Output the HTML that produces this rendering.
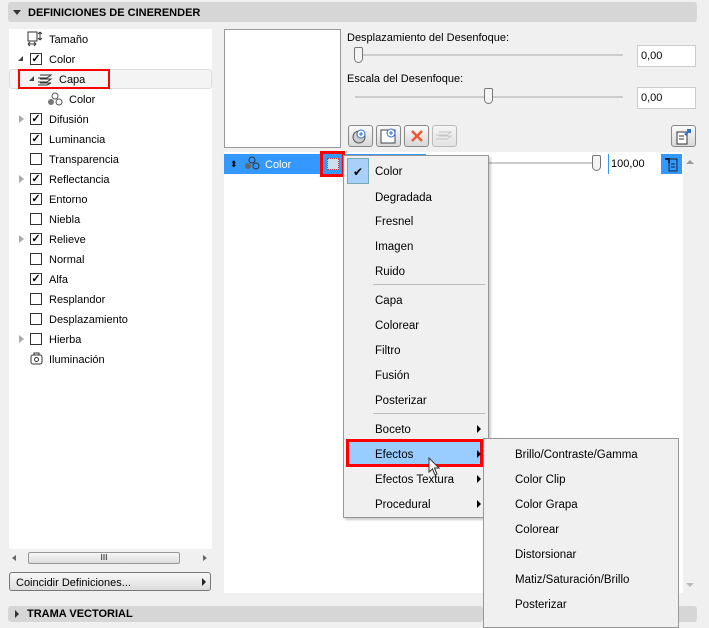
<!DOCTYPE html><html><head><style>
*{margin:0;padding:0;box-sizing:border-box}
body{width:709px;height:623px;background:#f0f0f0;font-family:"Liberation Sans",sans-serif;font-size:11px;color:#000;position:relative;overflow:hidden}
.a{position:absolute}
.hdr{background:#d6d6d6;border-radius:3px;font-weight:bold;font-size:11px}
.t{position:absolute;white-space:nowrap;line-height:14px}
.cb{position:absolute;width:12px;height:12px;border:1px solid #333;background:#fff;font-size:11px;line-height:10px;text-align:center;font-weight:bold}
.tri{position:absolute;width:0;height:0}
.inp{position:absolute;background:#fff;border:1px solid #ccc;padding-left:3px;line-height:20px}
.btn{position:absolute;width:25px;height:22px;border:1px solid #888;border-radius:3px;background:linear-gradient(#fafafa,#d8d8d8)}
.mi{position:absolute;left:375px;line-height:14px;font-size:11.5px}
.si{position:absolute;left:515px;line-height:14px;font-size:11.5px}
.ar{position:absolute;left:477px;width:0;height:0;border-left:4px solid #000;border-top:4px solid transparent;border-bottom:4px solid transparent}
</style></head><body>
<div class="a hdr" style="left:8px;top:2px;width:689px;height:20px"></div>
<div class="tri" style="left:13px;top:10px;border-top:5px solid #333;border-left:4px solid transparent;border-right:4px solid transparent"></div>
<div class="t" style="left:28px;top:6px;font-weight:bold">DEFINICIONES DE CINERENDER</div>

<div class="a" style="left:9px;top:29px;width:203px;height:520px;background:#fff"></div>
<div class="a" style="left:9px;top:69px;width:203px;height:20px;background:#f4f4f4;border:1px solid #ddd;border-radius:3px"></div>
<div class="a" style="left:18px;top:69px;width:92px;height:20px;border:2px solid #f00"></div>

<svg class="a" style="left:27px;top:31px" width="16" height="16" viewBox="0 0 16 16"><rect x="1" y="1" width="9" height="9" fill="none" stroke="#333"/><path d="M1 13h8M1 13l2-2M1 13l2 2M9 13l-2-2M9 13l-2 2M13 1v8M13 1l-2 2M13 1l2 2M13 9l-2-2M13 9l2-2" stroke="#333" fill="none"/></svg>
<div class="t" style="left:49px;top:33px">Tamaño</div>
<div class="tri" style="left:18px;top:56px;border-bottom:5px solid #444;border-left:5px solid transparent"></div>
<div class="cb" style="left:30px;top:53px">✓</div><div class="t" style="left:49px;top:53px">Color</div>
<div class="tri" style="left:29px;top:76px;border-bottom:5px solid #444;border-left:5px solid transparent"></div>
<svg class="a" style="left:37px;top:72px" width="16" height="14"><path d="M3 3h11L10 6H1M3 7h11L10 10H1M3 11h11L10 13H1" stroke="#333" fill="none"/></svg>
<div class="t" style="left:59px;top:73px">Capa</div>
<svg class="a" style="left:47px;top:92px" width="16" height="14"><circle cx="8" cy="4" r="3" fill="none" stroke="#555"/><circle cx="4" cy="10" r="3" fill="#777"/><circle cx="12" cy="10" r="3" fill="none" stroke="#555"/></svg>
<div class="t" style="left:69px;top:93px">Color</div>

<div class="tri" style="left:19px;top:115px;border-left:5px solid #aaa;border-top:4px solid transparent;border-bottom:4px solid transparent"></div>
<div class="cb" style="left:30px;top:113px">✓</div><div class="t" style="left:49px;top:113px">Difusión</div>
<div class="cb" style="left:30px;top:133px">✓</div><div class="t" style="left:49px;top:133px">Luminancia</div>
<div class="cb" style="left:30px;top:153px"></div><div class="t" style="left:49px;top:153px">Transparencia</div>
<div class="tri" style="left:19px;top:175px;border-left:5px solid #aaa;border-top:4px solid transparent;border-bottom:4px solid transparent"></div>
<div class="cb" style="left:30px;top:173px">✓</div><div class="t" style="left:49px;top:173px">Reflectancia</div>
<div class="cb" style="left:30px;top:193px">✓</div><div class="t" style="left:49px;top:193px">Entorno</div>
<div class="cb" style="left:30px;top:213px"></div><div class="t" style="left:49px;top:213px">Niebla</div>
<div class="tri" style="left:19px;top:235px;border-left:5px solid #aaa;border-top:4px solid transparent;border-bottom:4px solid transparent"></div>
<div class="cb" style="left:30px;top:233px">✓</div><div class="t" style="left:49px;top:233px">Relieve</div>
<div class="cb" style="left:30px;top:253px"></div><div class="t" style="left:49px;top:253px">Normal</div>
<div class="cb" style="left:30px;top:273px">✓</div><div class="t" style="left:49px;top:273px">Alfa</div>
<div class="cb" style="left:30px;top:293px"></div><div class="t" style="left:49px;top:293px">Resplandor</div>
<div class="cb" style="left:30px;top:313px"></div><div class="t" style="left:49px;top:313px">Desplazamiento</div>
<div class="tri" style="left:19px;top:335px;border-left:5px solid #aaa;border-top:4px solid transparent;border-bottom:4px solid transparent"></div>
<div class="cb" style="left:30px;top:333px"></div><div class="t" style="left:49px;top:333px">Hierba</div>
<svg class="a" style="left:30px;top:351px" width="13" height="14"><rect x="1" y="4" width="11" height="9" rx="2" fill="none" stroke="#333"/><circle cx="6.5" cy="8.5" r="2" fill="none" stroke="#333"/><path d="M4 4V2h5v2" stroke="#333" fill="none"/></svg>
<div class="t" style="left:49px;top:353px">Iluminación</div>

<div class="a" style="left:9px;top:550px;width:203px;height:16px;background:#f0f0f0"></div>
<div class="a" style="left:28px;top:552px;width:152px;height:12px;border:1px solid #999;border-radius:2px;background:linear-gradient(#f6f6f6,#ddd);text-align:center;font-size:8px;line-height:10px">III</div>
<div class="tri" style="left:12px;top:555px;border-right:4px solid #666;border-top:3px solid transparent;border-bottom:3px solid transparent"></div>
<div class="tri" style="left:203px;top:555px;border-left:4px solid #666;border-top:3px solid transparent;border-bottom:3px solid transparent"></div>
<div class="a" style="left:9px;top:572px;width:202px;height:19px;border:1px solid #777;border-radius:3px;background:linear-gradient(#f8f8f8,#ddd)"></div>
<div class="t" style="left:16px;top:576px">Coincidir Definiciones...</div>
<div class="tri" style="left:202px;top:578px;border-left:4px solid #222;border-top:4px solid transparent;border-bottom:4px solid transparent"></div>

<div class="a" style="left:224px;top:152px;width:459px;height:441px;background:#fff"></div>
<div class="a" style="left:224px;top:29px;width:117px;height:119px;background:#fff;border:1px solid #999"></div>

<div class="t" style="left:347px;top:31px">Desplazamiento del Desenfoque:</div>
<div class="a" style="left:355px;top:54px;width:268px;height:2px;background:#ccc"></div>
<div class="a" style="left:354px;top:47px;width:9px;height:16px;border:1px solid #777;border-radius:2px 2px 5px 5px;background:#f4f4f4"></div>
<div class="inp" style="left:637px;top:45px;width:59px;height:22px">0,00</div>
<div class="t" style="left:347px;top:72px">Escala del Desenfoque:</div>
<div class="a" style="left:355px;top:96px;width:268px;height:2px;background:#ccc"></div>
<div class="a" style="left:484px;top:88px;width:9px;height:16px;border:1px solid #777;border-radius:2px 2px 5px 5px;background:#f4f4f4"></div>
<div class="inp" style="left:637px;top:87px;width:59px;height:22px">0,00</div>

<div class="btn" style="left:348px;top:125px"><svg width="23" height="20"><circle cx="10" cy="11" r="6" fill="#ccc" stroke="#555"/><circle cx="12" cy="8" r="4" fill="#fff" stroke="#2a6ed0"/><path d="M12 6v4M10 8h4" stroke="#2a6ed0"/></svg></div>
<div class="btn" style="left:376px;top:125px"><svg width="23" height="20"><path d="M4 4h14v13H4z" fill="#fff" stroke="#444"/><circle cx="14" cy="7" r="4" fill="#fff" stroke="#2a6ed0"/><path d="M14 5v4M12 7h4" stroke="#2a6ed0"/></svg></div>
<div class="btn" style="left:404px;top:125px"><svg width="23" height="20"><path d="M7 5l10 10M17 5L7 15" stroke="#e53" stroke-width="2.5"/></svg></div>
<div class="btn" style="left:432px;top:125px;opacity:.5"><svg width="23" height="20"><path d="M6 6h12l-4 3H3M6 10h12l-4 3H3" stroke="#999" fill="none"/></svg></div>
<div class="btn" style="left:671px;top:125px"><svg width="23" height="20"><path d="M5 6h10v12H5z" fill="#fff" stroke="#333"/><path d="M7 10h5M7 13h5" stroke="#333"/><path d="M13 9l5-5M15 4h3v3" stroke="#2a6ed0" stroke-width="2" fill="none"/></svg></div>

<div class="a" style="left:224px;top:154px;width:202px;height:20px;background:#3399ff"></div>
<div class="t" style="left:230px;top:157px;color:#000;font-size:9px">⬍</div>
<svg class="a" style="left:244px;top:156px" width="16" height="14"><circle cx="8" cy="4" r="3" fill="none" stroke="#333"/><circle cx="4" cy="10" r="3" fill="#666"/><circle cx="12" cy="10" r="3" fill="none" stroke="#333"/></svg>
<div class="t" style="left:265px;top:158px;color:#fff">Color</div>
<div class="a" style="left:320px;top:151px;width:25px;height:26px;border:3px solid #f00"></div>
<div class="a" style="left:327px;top:158px;width:12px;height:12px;background:#cde;border:1px dotted #c33"></div>
<div class="a" style="left:488px;top:162px;width:110px;height:2px;background:#ccc"></div>
<div class="a" style="left:592px;top:155px;width:9px;height:16px;border:1px solid #777;border-radius:2px 2px 5px 5px;background:#f4f4f4"></div>
<div class="a" style="left:608px;top:154px;width:53px;height:20px;background:#fff;border-left:1px solid #3399ff;padding-left:2px;line-height:20px">100,00</div>
<div class="a" style="left:661px;top:154px;width:21px;height:20px;background:#3399ff"><svg width="21" height="20"><path d="M8 5h8v12H8z" fill="#3399ff" stroke="#123"/><path d="M10 10h4M10 13h4" stroke="#123"/><path d="M4 5h4v4" stroke="#124" stroke-width="2" fill="none"/></svg></div>
<div class="a" style="left:683px;top:152px;width:14px;height:441px;background:#f0f0f0"></div>
<div class="tri" style="left:686px;top:160px;border-bottom:4px solid #999;border-left:4px solid transparent;border-right:4px solid transparent"></div>
<div class="tri" style="left:686px;top:583px;border-top:4px solid #bbb;border-left:4px solid transparent;border-right:4px solid transparent"></div>

<div class="a" style="left:343px;top:155px;width:146px;height:363px;background:#f0f0f0;border:1px solid #979797;box-shadow:2px 2px 2px rgba(0,0,0,.2)"></div>
<div class="a" style="left:347px;top:158px;width:22px;height:26px;background:#a8d0f8;border:1px solid #7ab"></div>
<div class="t" style="left:353px;top:165px;font-size:12px">✔</div>
<div class="mi" style="top:165px">Color</div>
<div class="mi" style="top:191px">Degradada</div>
<div class="mi" style="top:215px">Fresnel</div>
<div class="mi" style="top:240px">Imagen</div>
<div class="mi" style="top:265px">Ruido</div>
<div class="a" style="left:373px;top:284px;width:112px;height:1px;background:#bbb"></div>
<div class="mi" style="top:294px">Capa</div>
<div class="mi" style="top:319px">Colorear</div>
<div class="mi" style="top:344px">Filtro</div>
<div class="mi" style="top:369px">Fusión</div>
<div class="mi" style="top:394px">Posterizar</div>
<div class="a" style="left:373px;top:413px;width:112px;height:1px;background:#bbb"></div>
<div class="mi" style="top:423px">Boceto</div><div class="ar" style="top:425px"></div>
<div class="a" style="left:346px;top:439px;width:137px;height:28px;background:#99ccff;border:3px solid #f00"></div>
<div class="mi" style="top:448px">Efectos</div><div class="ar" style="top:450px"></div>
<div class="mi" style="top:473px">Efectos Textura</div><div class="ar" style="top:475px"></div>
<div class="mi" style="top:498px">Procedural</div><div class="ar" style="top:500px"></div>

<div class="a" style="left:483px;top:438px;width:196px;height:190px;background:#f0f0f0;border:1px solid #979797"></div>
<div class="si" style="top:448px">Brillo/Contraste/Gamma</div>
<div class="si" style="top:473px">Color Clip</div>
<div class="si" style="top:498px">Color Grapa</div>
<div class="si" style="top:523px">Colorear</div>
<div class="si" style="top:548px">Distorsionar</div>
<div class="si" style="top:573px">Matiz/Saturación/Brillo</div>
<div class="si" style="top:598px">Posterizar</div>

<svg class="a" style="left:428px;top:457px" width="14" height="20"><path d="M1 1v14l3.5-3 2.5 6 2-1-2.5-6H11z" fill="#fff" stroke="#333"/></svg>

<div class="a hdr" style="left:8px;top:606px;width:475px;height:16px"></div>
<div class="tri" style="left:15px;top:610px;border-left:4px solid #333;border-top:4px solid transparent;border-bottom:4px solid transparent"></div>
<div class="t" style="left:27px;top:607px;font-weight:bold">TRAMA VECTORIAL</div>
<div class="a hdr" style="left:679px;top:606px;width:18px;height:16px;border-radius:0 3px 3px 0"></div>
</body></html>
